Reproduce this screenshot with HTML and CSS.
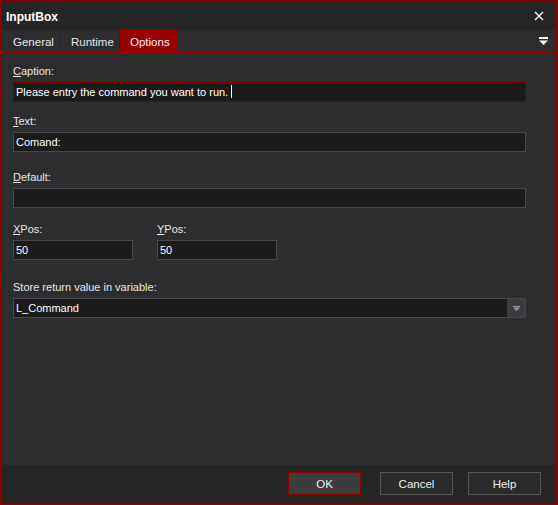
FILE: index.html
```html
<!DOCTYPE html>
<html>
<head>
<meta charset="utf-8">
<link rel="stylesheet" href="styles.css">
</head>
<body>
<div class="window">
  <div class="titlebar">
    <span class="title">InputBox</span>
    <svg class="close" width="10" height="10" viewBox="0 0 10 10"><path d="M1 1L9 9M9 1L1 9" stroke="#e8e8e8" stroke-width="1.6"/></svg>
  </div>
  <div class="tabbar">
    <div class="tab t1">General</div>
    <div class="tab t2">Runtime</div>
    <div class="tab t3 active">Options</div>
    <div class="tabfill"></div>
    <svg class="menu" width="9" height="9" viewBox="0 0 9 9"><rect x="0" y="0" width="9" height="2" fill="#fff"/><path d="M0 3.5H9L4.5 8Z" fill="#fff"/></svg>
  </div>
  <div class="content">
    <div class="field f1">
      <div class="label"><u>C</u>aption:</div>
      <div class="input wide focus">Please entry the command you want to run. <span class="caret"></span></div>
    </div>
    <div class="field f2">
      <div class="label"><u>T</u>ext:</div>
      <div class="input wide">Comand:</div>
    </div>
    <div class="field f3">
      <div class="label"><u>D</u>efault:</div>
      <div class="input wide"></div>
    </div>
    <div class="row f4">
      <div class="field">
        <div class="label"><u>X</u>Pos:</div>
        <div class="input small">50</div>
      </div>
      <div class="field">
        <div class="label"><u>Y</u>Pos:</div>
        <div class="input small">50</div>
      </div>
    </div>
    <div class="field f5">
      <div class="label">Store return value in variable:</div>
      <div class="combo">
        <div class="combo-text">L_Command</div>
        <div class="combo-btn"><svg width="7" height="5" viewBox="0 0 7 5"><rect x="0" y="0" width="7" height="1" fill="#9a9a9a"/><path d="M0 1.5H7L3.5 5Z" fill="#9a9a9a"/></svg></div>
      </div>
    </div>
  </div>
  <div class="footer">
    <div class="btn ok">OK</div>
    <div class="btn cancel">Cancel</div>
    <div class="btn help">Help</div>
  </div>
</div>
</body>
</html>
```
FILE: styles.css
```css
html, body {
  margin: 0;
  padding: 0;
  background: #2d2d30;
}
.window {
  width: 558px;
  height: 505px;
  box-sizing: border-box;
  border: 2px solid #8b0000;
  border-top-width: 1px;
  border-bottom-width: 1px;
  display: flex;
  flex-direction: column;
  font-family: "Liberation Sans", Arial, sans-serif;
  font-size: 11px;
  color: #e6e6e6;
  background: #2d2d30;
}
.titlebar {
  height: 29px;
  flex: none;
  background: #252526;
  display: flex;
  align-items: center;
  justify-content: space-between;
  padding: 0 12px 0 4px;
}
.title {
  font-weight: bold;
  font-size: 12px;
  color: #ffffff;
  margin-top: 2px;
}
.close {
  display: block;
}
.tabbar {
  height: 22px;
  flex: none;
  display: flex;
  align-items: stretch;
  border-bottom: 2px solid #990000;
  background: #2d2d30;
  padding: 0 3px 0 1px;
}
.tab {
  box-sizing: border-box;
  display: flex;
  align-items: center;
  padding: 1px 0 0 10px;
  font-size: 11.5px;
  color: #e6e6e6;
  border-right: 1px solid #262628;
}
.t1 { width: 58px; }
.t2 { width: 59px; }
.tab.active {
  width: 57px;
  background: #990000;
  color: #f4f0f4;
  border-right: none;
}
.tabfill { flex: 1; }
.menu {
  align-self: center;
  margin-right: 5px;
  display: block;
}
.content {
  flex: 1;
  padding: 0 0 0 11px;
}
.field {
  display: flex;
  flex-direction: column;
}
.label {
  height: 14px;
  line-height: 13px;
  margin-bottom: 3px;
  color: #e6e6e6;
}
.label u {
  text-decoration-thickness: 1px;
  text-underline-offset: 1px;
}
.f1 { margin-top: 11px; }
.f2 { margin-top: 13px; }
.f3 { margin-top: 19px; }
.f4 { margin-top: 15px; }
.f5 { margin-top: 21px; }
.row {
  display: flex;
  gap: 24px;
}
.input {
  box-sizing: border-box;
  height: 20px;
  background: #1b1b1b;
  border: 1px solid #48484a;
  color: #ffffff;
  line-height: 18px;
  padding-left: 2px;
  white-space: nowrap;
  font-size: 11px;
}
.input.wide { width: 513px; }
.input.small { width: 120px; }
.input.focus {
  border-color: #7a0000;
}
.caret {
  display: inline-block;
  width: 1px;
  height: 13px;
  background: #ffffff;
  vertical-align: -2px;
}
.combo {
  box-sizing: border-box;
  width: 513px;
  height: 20px;
  border: 1px solid #48484a;
  background: #1b1b1b;
  display: flex;
}
.combo-text {
  flex: 1;
  color: #ffffff;
  line-height: 18px;
  padding-left: 2px;
}
.combo-btn {
  width: 18px;
  background: #3c3c40;
  display: flex;
  align-items: center;
  justify-content: center;
}
.combo-btn svg { display: block; }
.footer {
  height: 39px;
  flex: none;
  background: #252526;
  display: flex;
  align-items: flex-start;
  justify-content: flex-end;
  padding: 7px 15px 0 0;
  box-sizing: border-box;
}
.btn {
  box-sizing: border-box;
  width: 73px;
  height: 23px;
  border: 1px solid #555557;
  background: #2a2a2b;
  color: #f0f0f0;
  font-size: 11.5px;
  display: flex;
  align-items: center;
  justify-content: center;
}
.btn.ok {
  background: #3c3c3c;
  border-color: #8b0000;
  margin-right: 19px;
}
.btn.cancel { margin-right: 15px; }
```
